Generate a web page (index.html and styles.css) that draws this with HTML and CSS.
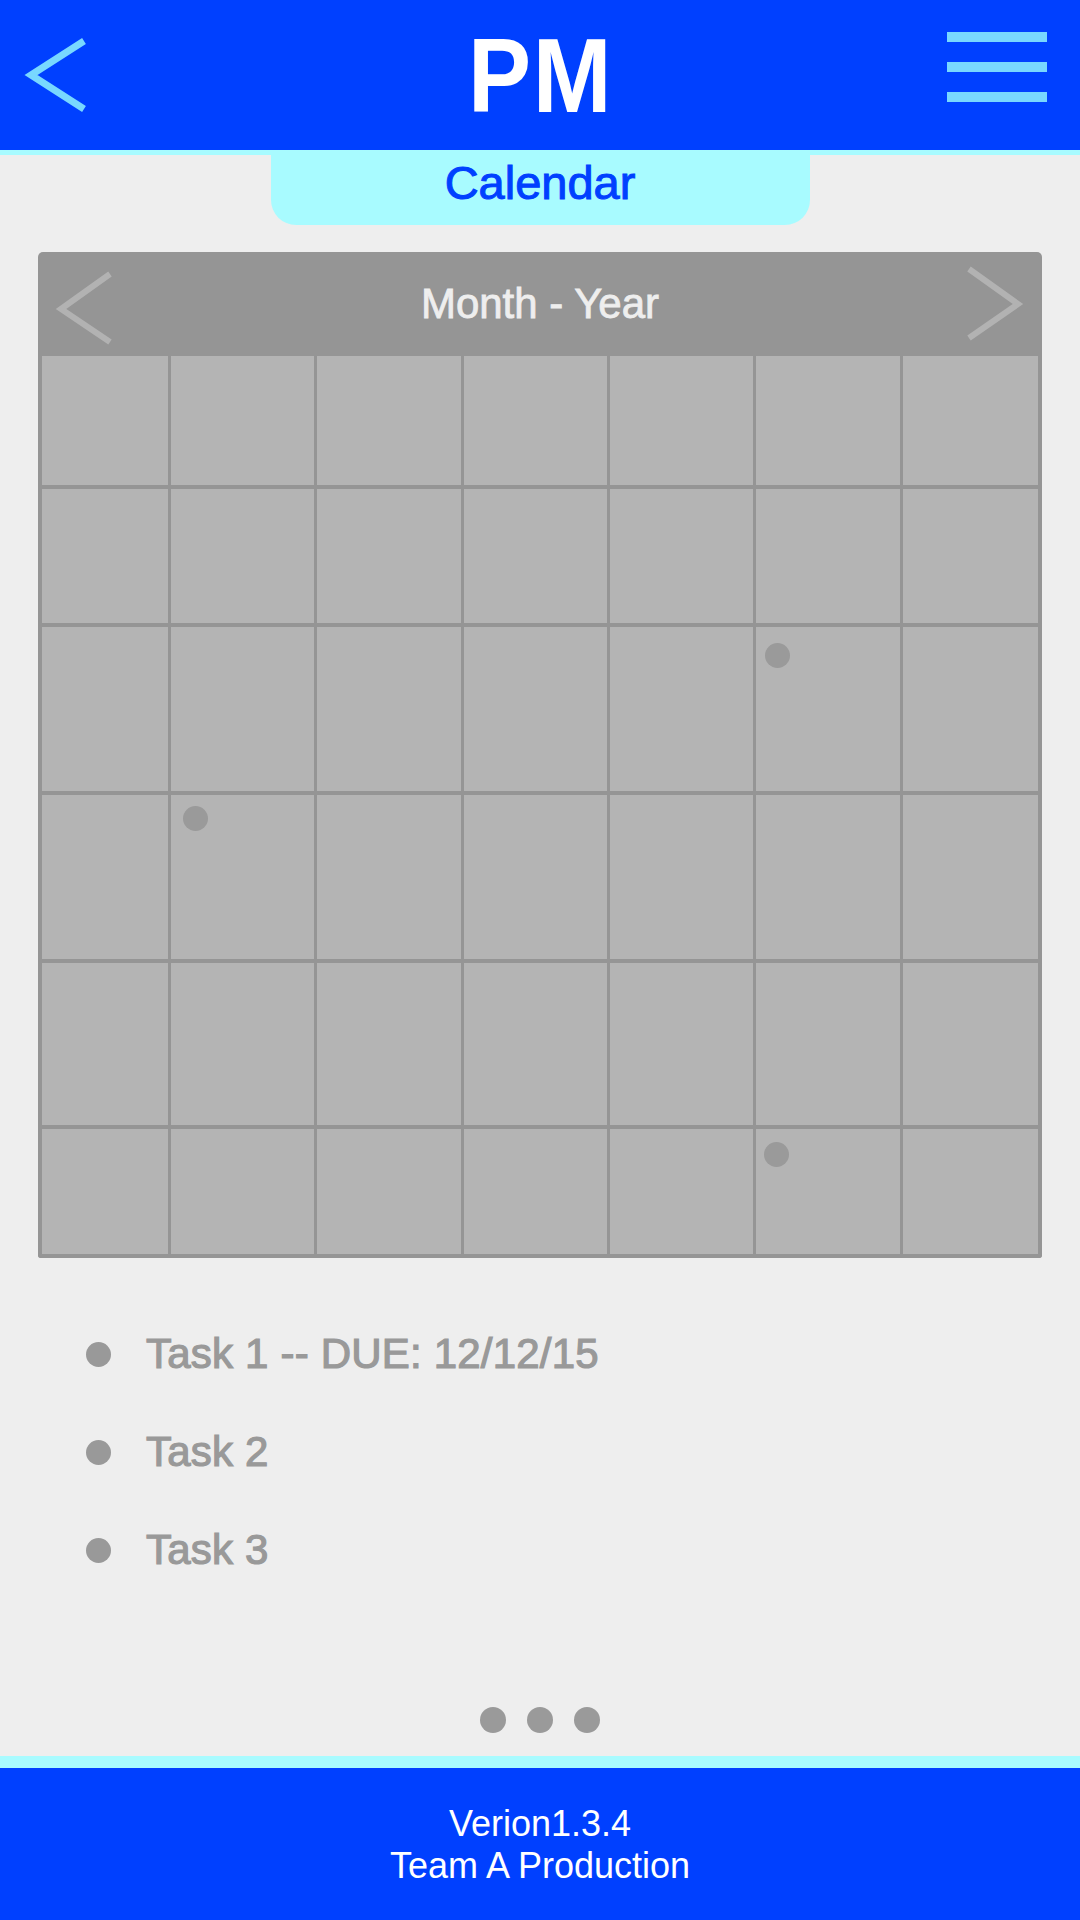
FILE: index.html
```html
<!DOCTYPE html>
<html lang="en">
<head>
<meta charset="utf-8">
<title>PM - Calendar</title>
<link rel="stylesheet" href="styles.css">
</head>
<body>
<div class="page">
  <header class="topbar">
    <div class="back">
      <svg width="100" height="150" viewBox="0 0 100 150" aria-hidden="true">
        <polyline points="84,41 31,75 84,109" fill="none" stroke="#78D8FF" stroke-width="7" stroke-linejoin="miter"/>
      </svg>
    </div>
    <h1 class="title">PM</h1>
    <div class="menu">
      <span class="bar"></span>
      <span class="bar"></span>
      <span class="bar"></span>
    </div>
  </header>

  <div class="tab">Calendar</div>

  <section class="calendar">
    <div class="cal-head">
      <svg class="arrow" width="100" height="104" viewBox="0 0 100 104" aria-hidden="true">
        <polyline points="72,22 23,57 72,90" fill="none" stroke="#B2B2B2" stroke-width="6"/>
      </svg>
      <div class="month">Month - Year</div>
      <svg class="arrow" width="100" height="104" viewBox="0 0 100 104" aria-hidden="true">
        <polyline points="27,17 76,52 27,86" fill="none" stroke="#B2B2B2" stroke-width="6"/>
      </svg>
    </div>
    <div class="cal-grid">
      <div class="cell"></div><div class="cell"></div><div class="cell"></div><div class="cell"></div><div class="cell"></div><div class="cell"></div><div class="cell"></div>
      <div class="cell"></div><div class="cell"></div><div class="cell"></div><div class="cell"></div><div class="cell"></div><div class="cell"></div><div class="cell"></div>
      <div class="cell"></div><div class="cell"></div><div class="cell"></div><div class="cell"></div><div class="cell"></div><div class="cell cell-a"><span class="event"></span></div><div class="cell"></div>
      <div class="cell"></div><div class="cell cell-b"><span class="event"></span></div><div class="cell"></div><div class="cell"></div><div class="cell"></div><div class="cell"></div><div class="cell"></div>
      <div class="cell"></div><div class="cell"></div><div class="cell"></div><div class="cell"></div><div class="cell"></div><div class="cell"></div><div class="cell"></div>
      <div class="cell"></div><div class="cell"></div><div class="cell"></div><div class="cell"></div><div class="cell"></div><div class="cell cell-c"><span class="event"></span></div><div class="cell"></div>
    </div>
  </section>

  <ul class="tasks">
    <li class="task"><span class="bullet"></span><span class="task-text">Task 1 -- DUE: 12/12/15</span></li>
    <li class="task"><span class="bullet"></span><span class="task-text">Task 2</span></li>
    <li class="task"><span class="bullet"></span><span class="task-text">Task 3</span></li>
  </ul>

  <div class="pager">
    <span class="pdot"></span>
    <span class="pdot"></span>
    <span class="pdot"></span>
  </div>

  <footer class="footer">
    <div>Verion1.3.4</div>
    <div>Team A Production</div>
  </footer>
</div>
</body>
</html>
```

FILE: styles.css
```css
* {
  box-sizing: border-box;
}

html, body {
  margin: 0;
  padding: 0;
}

body {
  background: #EEEEEE;
  font-family: "Liberation Sans", Arial, sans-serif;
}

.page {
  min-height: 1920px;
  display: flex;
  flex-direction: column;
}

/* Top bar */
.topbar {
  height: 155px;
  background: #0040FF;
  border-bottom: 5px solid #A8FBFF;
  display: grid;
  grid-template-columns: 1fr auto 1fr;
  align-items: start;
}

.back {
  height: 150px;
}

.back svg {
  display: block;
}

.title {
  margin: 23px 0 0;
  padding-left: 2px;
  font-size: 105px;
  line-height: 105px;
  font-weight: bold;
  letter-spacing: 2px;
  color: #FFFFFF;
  transform: scaleX(0.9);
}

.menu {
  justify-self: end;
  margin: 32px 33px 0 0;
  display: flex;
  flex-direction: column;
  gap: 20px;
}

.bar {
  display: block;
  width: 100px;
  height: 10px;
  background: #78D8FF;
}

/* Tab */
.tab {
  align-self: center;
  width: 539px;
  height: 70px;
  background: #A8FBFF;
  border-radius: 0 0 25px 25px;
  text-align: center;
  font-size: 47px;
  line-height: 56px;
  color: #0040FF;
  -webkit-text-stroke: 1px #0040FF;
}

/* Calendar */
.calendar {
  align-self: center;
  width: 1004px;
  margin-top: 27px;
}

.cal-head {
  height: 104px;
  background: #959595;
  border-radius: 5px 5px 0 0;
  display: grid;
  grid-template-columns: 100px 1fr 100px;
  align-items: center;
}

.arrow {
  display: block;
}

.month {
  text-align: center;
  font-size: 42px;
  line-height: 104px;
  color: #EEEEEE;
  -webkit-text-stroke: 0.8px #EEEEEE;
}

.cal-grid {
  border: 4px solid #959595;
  border-top: 0;
  border-radius: 0 0 3px 3px;
  background: #959595;
  display: grid;
  grid-template-columns: 126px 143px 144px 143px 143px 144px 135px;
  grid-template-rows: 129px 134px 164px 164px 162px 125px;
  column-gap: 3px;
  row-gap: 4px;
}

.cell {
  background: #B4B4B4;
}

.cell-a {
  padding: 16px 0 0 9px;
}

.cell-b {
  padding: 11px 0 0 12px;
}

.cell-c {
  padding: 13px 0 0 8px;
}

.event {
  display: block;
  width: 25px;
  height: 25px;
  border-radius: 50%;
  background: #9A9A9A;
}

/* Tasks */
.tasks {
  list-style: none;
  margin: 47px 0 0;
  padding: 0 0 0 86px;
}

.task {
  height: 98px;
  display: flex;
  align-items: center;
  gap: 35px;
}

.bullet {
  width: 25px;
  height: 25px;
  border-radius: 50%;
  background: #999999;
  flex: none;
}

.task-text {
  font-size: 42px;
  line-height: 98px;
  letter-spacing: 0.2px;
  color: #999999;
  -webkit-text-stroke: 1.2px #999999;
}

/* Pager */
.pager {
  margin-top: auto;
  margin-bottom: 23px;
  display: flex;
  justify-content: center;
  gap: 21px;
}

.pdot {
  width: 26px;
  height: 26px;
  border-radius: 50%;
  background: #9A9A9A;
}

/* Footer */
.footer {
  height: 164px;
  background: #0040FF;
  border-top: 12px solid #A8FBFF;
  padding-top: 35px;
  text-align: center;
  color: #FFFFFF;
  font-size: 36px;
  line-height: 42px;
}
```
